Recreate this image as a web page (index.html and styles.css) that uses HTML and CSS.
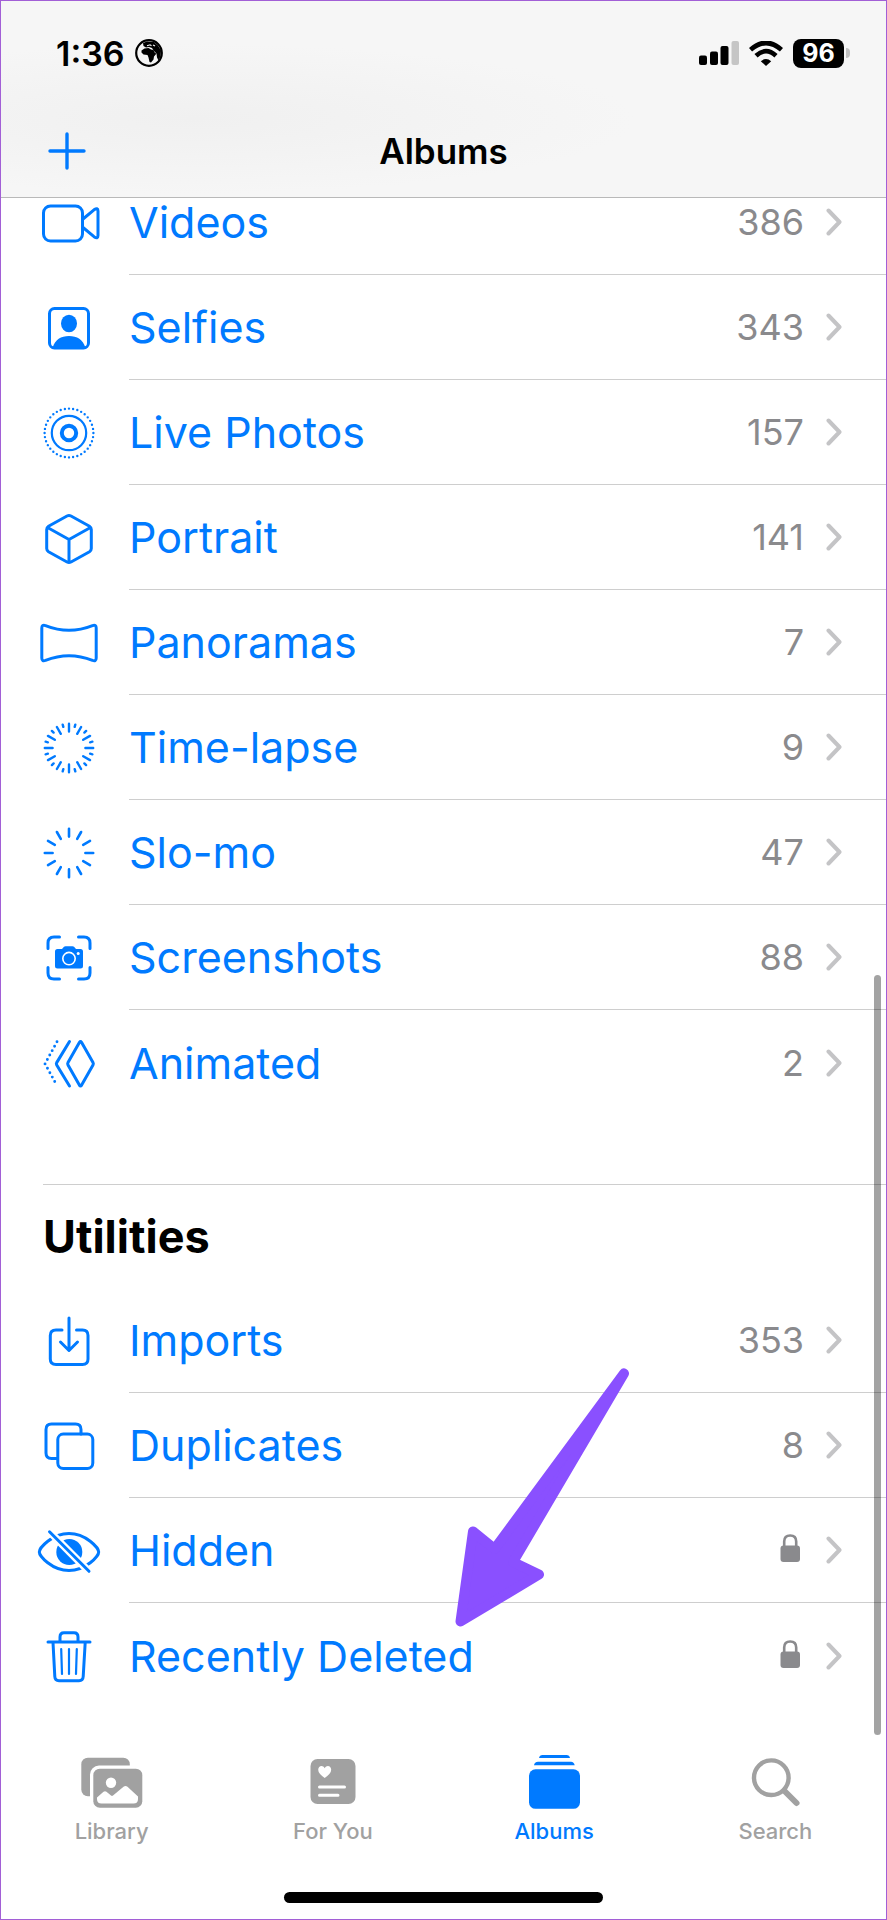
FILE: index.html
```html
<!DOCTYPE html>
<html lang="en">
<head>
    <meta charset="UTF-8">
    <meta name="viewport" content="width=device-width, initial-scale=1.0">
    <title>Albums</title>
    <link rel="stylesheet" href="styles.css">
</head>
<body>
    <header class="top-bar">
        <div class="status-bar">
            <div class="status-left">
                <span class="time">1:36</span>
                <svg class="globe" viewBox="0 0 28 28">
                    <circle cx="14" cy="14" r="12.800" fill="none" stroke="#000" stroke-width="2.200"/>
                    <path d="M8 4l4-1.500 7 0.500 4 3.500 3 5-0.500 6-2 4-1.500-3-0.500-4-2.500-2.500-2-3-3-1-3 0.500-2.500-1.500z"/>
                    <path d="M6.500 11.500l3-2 4-0.500 2.500 1.500 2.500 0.500 1.500 3 1.500 0.500-2.500 3-0.500 3-2.500 3-1.500-0.500-1-4.500-1-2.500-4-0.500-2-2z"/>
                    <path d="M12 6.800l3-1 1.500 1M18 6l2 1" fill="none" stroke="#f6f6f6" stroke-width="1.200"/>
                </svg>
            </div>
            <div class="status-right">
                <svg class="signal" viewBox="0 0 40 24">
                    <rect x="0" y="14.500" width="8" height="9.500" rx="2"/>
                    <rect x="11" y="10.500" width="8" height="13.500" rx="2"/>
                    <rect x="21.500" y="5" width="8" height="19" rx="2"/>
                    <rect x="32.500" y="0" width="7.500" height="24" rx="2" fill="#c5c5c5"/>
                </svg>
                <svg class="wifi" viewBox="0 0 34 25">
                    <path d="M1.500 8.800Q17-5 32.500 8.800" fill="none" stroke="#000" stroke-width="4.800"/>
                    <path d="M7 14.800Q17 5.500 27 14.800" fill="none" stroke="#000" stroke-width="4.600"/>
                    <path d="M11.800 20.200Q17 16 22.200 20.200L17 25z"/>
                </svg>
                <div class="battery"><span class="battery-level">96</span><span class="battery-cap"></span></div>
            </div>
        </div>
        <div class="nav-bar">
            <button class="add-btn" type="button" aria-label="Add album">
                <svg viewBox="0 0 40 40"><path d="M20 3V37M3 20H37"/></svg>
            </button>
            <h1>Albums</h1>
        </div>
    </header>

    <main>
        <section class="album-list">
            <a class="row" href="#videos">
                <svg class="icon" viewBox="0 0 64 64"><rect x="6.500" y="15" width="39" height="35" rx="7"/><path d="M46 28L57 18.800Q61 16 61 20V44.500Q61 48.500 57 45.700L46 36.500"/></svg>
                <span class="row-body"><span class="name">Videos</span><span class="count">386</span><svg class="chevron" viewBox="0 0 16 28"><path d="M2.500 2.500L13.500 14L2.500 25.500"/></svg></span>
            </a>
            <a class="row" href="#selfies">
                <svg class="icon" viewBox="0 0 64 64"><rect x="12.500" y="12.500" width="39" height="39.500" rx="5"/><ellipse class="solid" cx="32" cy="27.500" rx="8" ry="8.700"/><path class="solid" d="M15.500 52C18 43.500 24 40 32 40S46 43.500 48.500 52Z"/></svg>
                <span class="row-body"><span class="name">Selfies</span><span class="count">343</span><svg class="chevron" viewBox="0 0 16 28"><path d="M2.500 2.500L13.500 14L2.500 25.500"/></svg></span>
            </a>
            <a class="row" href="#live-photos">
                <svg class="icon" viewBox="0 0 64 64"><circle cx="32" cy="32" r="24.400" stroke-width="2.400" pathLength="36" stroke-dasharray="0 1"/><circle cx="32" cy="32" r="17.200" stroke-width="2.200"/><circle cx="32" cy="32" r="7.200" stroke-width="4"/></svg>
                <span class="row-body"><span class="name">Live Photos</span><span class="count">157</span><svg class="chevron" viewBox="0 0 16 28"><path d="M2.500 2.500L13.500 14L2.500 25.500"/></svg></span>
            </a>
            <a class="row" href="#portrait">
                <svg class="icon" viewBox="0 0 64 64"><path d="M30 10Q32 9 34 10L52.500 20.200Q54.300 21.300 54.300 23.500V42.500Q54.300 44.600 52.500 45.700L34 56Q32 57 30 56L11.500 45.700Q9.700 44.600 9.700 42.500V23.500Q9.700 21.300 11.500 20.200ZM10.500 21.500L32 33.500L53.500 21.500M32 33.500V56"/></svg>
                <span class="row-body"><span class="name">Portrait</span><span class="count">141</span><svg class="chevron" viewBox="0 0 16 28"><path d="M2.500 2.500L13.500 14L2.500 25.500"/></svg></span>
            </a>
            <a class="row" href="#panoramas">
                <svg class="icon" viewBox="0 0 64 64"><path d="M4.800 17Q4.800 13.400 8.500 14.600Q32 24 55.500 14.600Q59.200 13.400 59.200 17V47Q59.200 50.600 55.500 49.400Q32 40 8.500 49.400Q4.800 50.600 4.800 47Z"/></svg>
                <span class="row-body"><span class="name">Panoramas</span><span class="count">7</span><svg class="chevron" viewBox="0 0 16 28"><path d="M2.500 2.500L13.500 14L2.500 25.500"/></svg></span>
            </a>
            <a class="row" href="#time-lapse">
                <svg class="icon" viewBox="0 0 64 64"><path stroke-width="2.400" d="M32 7.800V15.600M44.100 11L40.200 17.800M53 19.900L46.200 23.800M56.200 32H48.400M53 44.100L46.200 40.200M44.100 53L40.200 46.200M32 56.200V48.400M19.900 53L23.800 46.200M11 44.100L17.800 40.200M7.800 32H15.600M11 19.900L17.800 23.800M19.900 11L23.800 17.800M38.300 8.600L37.700 10.900M49.100 14.900L47.400 16.600M55.400 25.700L53.100 26.300M55.400 38.300L53.100 37.700M49.100 49.100L47.400 47.400M38.300 55.400L37.700 53.100M25.700 55.400L26.300 53.100M14.900 49.100L16.600 47.400M8.600 38.300L10.900 37.700M8.600 25.700L10.900 26.300M14.900 14.900L16.600 16.600M25.700 8.600L26.300 10.900"/></svg>
                <span class="row-body"><span class="name">Time-lapse</span><span class="count">9</span><svg class="chevron" viewBox="0 0 16 28"><path d="M2.500 2.500L13.500 14L2.500 25.500"/></svg></span>
            </a>
            <a class="row" href="#slo-mo">
                <svg class="icon" viewBox="0 0 64 64"><path stroke-width="2.600" d="M32 7.800V15.600M44.100 11L40.200 17.800M53 19.900L46.200 23.800M56.200 32H48.400M53 44.100L46.200 40.200M44.100 53L40.200 46.200M32 56.200V48.400M19.900 53L23.800 46.200M11 44.100L17.800 40.200M7.800 32H15.600M11 19.900L17.800 23.800M19.900 11L23.800 17.800"/></svg>
                <span class="row-body"><span class="name">Slo-mo</span><span class="count">47</span><svg class="chevron" viewBox="0 0 16 28"><path d="M2.500 2.500L13.500 14L2.500 25.500"/></svg></span>
            </a>
            <a class="row" href="#screenshots">
                <svg class="icon" viewBox="0 0 64 64"><path d="M11 22.500V17Q11 11 17 11H22.500M41.500 11H47Q53 11 53 17V22.500M53 41.500V47Q53 53 47 53H41.500M22.500 53H17Q11 53 11 47V41.500"/><path class="solid" d="M20.500 23H25L27 20.800Q27.500 20.300 28.500 20.300H35.500Q36.500 20.300 37 20.800L39 23H43.500Q46 23 46 25.500V40Q46 42.500 43.500 42.500H20.500Q18 42.500 18 40V25.500Q18 23 20.500 23Z"/><circle cx="32" cy="32.600" r="6.200" stroke="#fff" stroke-width="1.600"/><circle class="light" cx="41.200" cy="27.500" r="1.500"/></svg>
                <span class="row-body"><span class="name">Screenshots</span><span class="count">88</span><svg class="chevron" viewBox="0 0 16 28"><path d="M2.500 2.500L13.500 14L2.500 25.500"/></svg></span>
            </a>
            <a class="row" href="#animated">
                <svg class="icon" viewBox="0 0 64 64"><path d="M42.500 11.300Q43.500 9.800 44.500 11.300L56 31.600Q56.700 32.800 56 34L44.500 54.300Q43.500 55.800 42.500 54.300L31 34Q30.300 32.800 31 31.600ZM32.500 10.500L19.700 31.600Q19 32.800 19.700 34L32.500 55"/><path stroke-width="2.900" stroke-dasharray="0 5.030" d="M20 10.800L8 32.800L20.100 54.900"/></svg>
                <span class="row-body"><span class="name">Animated</span><span class="count">2</span><svg class="chevron" viewBox="0 0 16 28"><path d="M2.500 2.500L13.500 14L2.500 25.500"/></svg></span>
            </a>
        </section>

        <section class="album-list utilities">
            <h2>Utilities</h2>
            <a class="row" href="#imports">
                <svg class="icon" viewBox="0 0 64 64"><path d="M25 21H19Q13.300 21 13.300 26.500V50Q13.300 55.500 19 55.500H45.500Q51 55.500 51 50V26.500Q51 21 45.500 21H39.500M32 9V41M23.500 33L32 41.500L40.500 33"/></svg>
                <span class="row-body"><span class="name">Imports</span><span class="count">353</span><svg class="chevron" viewBox="0 0 16 28"><path d="M2.500 2.500L13.500 14L2.500 25.500"/></svg></span>
            </a>
            <a class="row" href="#duplicates">
                <svg class="icon" viewBox="0 0 64 64"><path d="M44 20V15.500Q44 10 38.500 10H14.500Q9 10 9 15.500V39Q9 44.500 14.500 44.500H20"/><rect x="20.800" y="20.100" width="35" height="34.500" rx="5.500"/></svg>
                <span class="row-body"><span class="name">Duplicates</span><span class="count">8</span><svg class="chevron" viewBox="0 0 16 28"><path d="M2.500 2.500L13.500 14L2.500 25.500"/></svg></span>
            </a>
            <a class="row" href="#hidden">
                <svg class="icon" viewBox="0 0 64 64"><path d="M2.300 33C2.300 29 15 14.500 32 14.500S61.700 29 61.700 33S49 51.500 32 51.500S2.300 37 2.300 33Z"/><circle class="solid" cx="32.300" cy="33" r="13"/><path d="M14 14.200L51 51.500" stroke="#fff" stroke-width="7.500" stroke-linecap="butt"/><path d="M12.500 12.800L52 52.300"/></svg>
                <span class="row-body"><span class="name">Hidden</span><svg class="lock" viewBox="0 0 24 34" role="img" aria-label="Locked"><rect x="0.500" y="12.500" width="19.500" height="16.500" rx="3"/><path d="M4.200 13V8.500Q4.200 2.500 10.200 2.500T16.200 8.500V13"/></svg><svg class="chevron" viewBox="0 0 16 28"><path d="M2.500 2.500L13.500 14L2.500 25.500"/></svg></span>
            </a>
            <a class="row" href="#recently-deleted">
                <svg class="icon" viewBox="0 0 64 64"><path d="M11 18H53M23 17.500V13Q23 8.800 27 8.800H37Q41 8.800 41 13V17.500M16 18.500L17.800 52.500Q18 56.700 22 56.700H42Q46 56.700 46.200 52.500L48.200 18.500"/><path stroke-width="2.200" d="M24.200 25L25 50M32 25V50M39.800 25L39 50"/></svg>
                <span class="row-body"><span class="name">Recently Deleted</span><svg class="lock" viewBox="0 0 24 34" role="img" aria-label="Locked"><rect x="0.500" y="12.500" width="19.500" height="16.500" rx="3"/><path d="M4.200 13V8.500Q4.200 2.500 10.200 2.500T16.200 8.500V13"/></svg><svg class="chevron" viewBox="0 0 16 28"><path d="M2.500 2.500L13.500 14L2.500 25.500"/></svg></span>
            </a>
            <svg class="pointer-arrow" viewBox="450 1360 190 275"><path d="M624 1373.500L494.500 1549L473 1531.500L460.500 1621.500L539 1574.500L513 1562Z"/></svg>
        </section>
    </main>

    <div class="scroll-thumb"></div>

    <footer>
        <nav class="tabs">
            <a class="tab" href="#library">
                <svg viewBox="0 0 64 56"><rect x="1.300" y="3.700" width="48.500" height="38.500" rx="6.500"/><rect class="light" x="10" y="11.500" width="56" height="46" rx="9"/><rect x="13.300" y="14.700" width="49" height="39" rx="6.500"/><circle class="light" cx="31" cy="28.700" r="5.200"/><path class="light" d="M17 43.500L23.500 37.800Q25 36.600 26.500 37.800L31 41.500Q32 42.300 33 41.500L43.500 32.700Q45.500 31.200 47.500 32.700L58 42.500V45Q58 49.500 53.500 49.500H21.500Q17 49.500 17 45Z"/></svg>
                <span>Library</span>
            </a>
            <a class="tab" href="#for-you">
                <svg viewBox="0 0 64 56"><rect x="9.500" y="5" width="45" height="45" rx="7"/><path class="light" d="M23.700 24C20 21.500 17.200 18.600 17.200 15.700C17.200 11.500 22 10.600 23.700 14.200C25.400 10.600 30.200 11.500 30.200 15.700C30.200 18.600 27.400 21.500 23.700 24Z"/><path d="M18.500 33H43.500M18.500 41.200H37" stroke="#fff" stroke-width="3" stroke-linecap="round"/></svg>
                <span>For You</span>
            </a>
            <a class="tab active" href="#albums" aria-current="page">
                <svg viewBox="0 0 64 56"><path d="M17 4Q17.500 1 20.500 1H44.500Q47.500 1 48 4ZM12 11.200Q12.500 7.700 16 7.700H49Q52 7.700 52.700 11.200Z"/><rect x="7" y="15.300" width="51" height="39.500" rx="6.500"/></svg>
                <span>Albums</span>
            </a>
            <a class="tab" href="#search">
                <svg viewBox="0 0 64 56"><g fill="none" stroke="currentColor" stroke-linecap="round"><circle cx="28.300" cy="23.700" r="17.300" stroke-width="4.400"/><path d="M41.500 37L53.500 49" stroke-width="6"/></g></svg>
                <span>Search</span>
            </a>
        </nav>
        <div class="home-indicator"></div>
    </footer>
</body>
</html>
```
FILE: styles.css
```css
* {
    box-sizing: border-box;
}
body {
    position: relative;
    display: flex;
    flex-direction: column;
    min-height: 100vh;
    margin: 0;
    border: 1px solid #a25fd6;
    background-color: #fff;
    color: #000;
    font-family: Inter, "Liberation Sans", sans-serif;
}
h1, h2 {
    margin: 0;
}
a {
    text-decoration: none;
}

/* Header */
.top-bar {
    position: relative;
    z-index: 1;
    border-bottom: 1px solid #b9b9b9;
    background: radial-gradient(ellipse at 22% 60%, #f0f0f0, #f6f6f6 45%);
}
.status-bar {
    display: flex;
    justify-content: space-between;
    align-items: center;
    height: 104px;
    padding: 0 36px 0 55px;
}
.status-left, .status-right {
    display: flex;
    align-items: center;
    gap: 10px;
}
.time {
    font-size: 34px;
    font-weight: 600;
}
.globe {
    width: 28px;
    height: 28px;
}
.signal {
    width: 40px;
    height: 24px;
}
.wifi {
    width: 34px;
    height: 25px;
}
.battery {
    display: flex;
    align-items: center;
    gap: 2px;
}
.battery-level {
    width: 51px;
    border-radius: 8px;
    background-color: #000;
    color: #fff;
    font-size: 25px;
    font-weight: 700;
    line-height: 29px;
    text-align: center;
}
.battery-cap {
    width: 4px;
    height: 10px;
    border-radius: 0 4px 4px 0;
    background-color: #c0c0c0;
}
.nav-bar {
    display: grid;
    grid-template-columns: 1fr auto 1fr;
    align-items: center;
    height: 92px;
    padding: 0 46px;
}
.nav-bar h1 {
    font-size: 35px;
    font-weight: 600;
}
.add-btn {
    width: 40px;
    height: 40px;
    padding: 0;
    border: none;
    background: none;
    cursor: pointer;
}
.add-btn svg {
    display: block;
    fill: none;
    stroke: #007aff;
    stroke-width: 3.4;
    stroke-linecap: round;
}

/* Album rows, scrolled partly under the header */
main {
    margin-top: -28px;
}
.row {
    display: flex;
    align-items: center;
    gap: 28px;
    padding-left: 36px;
    color: #007aff;
}
.icon {
    flex: none;
    width: 64px;
    height: 64px;
    fill: none;
    stroke: #007aff;
    stroke-width: 3;
    stroke-linecap: round;
    stroke-linejoin: round;
}
.icon .solid {
    fill: #007aff;
    stroke: none;
}
.icon .light {
    fill: #fff;
    stroke: none;
}
.row-body {
    display: flex;
    flex: 1;
    align-items: center;
    gap: 22px;
    height: 105px;
    padding-right: 44px;
    border-bottom: 1px solid #cecece;
}
.row:last-of-type .row-body {
    border-bottom: none;
}
.name {
    flex: 1;
    font-size: 43px;
}
.count {
    color: #8a8a8d;
    font-size: 36px;
}
.chevron {
    width: 16px;
    height: 28px;
    fill: none;
    stroke: #c4c4c6;
    stroke-width: 4;
    stroke-linecap: round;
    stroke-linejoin: round;
}
.lock {
    width: 24px;
    height: 34px;
    fill: #8a8a8d;
}
.lock path {
    fill: none;
    stroke: #8a8a8d;
    stroke-width: 2.6;
}

/* Utilities */
.utilities {
    position: relative;
    margin-top: 69px;
}
.utilities h2 {
    margin-left: 42px;
    border-top: 1px solid #cecece;
    font-size: 45px;
    font-weight: 700;
    line-height: 103px;
}
.pointer-arrow {
    position: absolute;
    top: 176px;
    left: 449px;
    width: 190px;
    height: 275px;
    fill: #8a50ff;
    stroke: #8a50ff;
    stroke-width: 10;
    stroke-linejoin: round;
    pointer-events: none;
}
.scroll-thumb {
    position: absolute;
    top: 974px;
    right: 5px;
    width: 7px;
    height: 760px;
    border-radius: 4px;
    background-color: rgba(0, 0, 0, 0.36);
}

/* Tab bar */
footer {
    margin-top: auto;
    padding-bottom: 16px;
}
.tabs {
    display: grid;
    grid-template-columns: repeat(4, 1fr);
}
.tab {
    display: flex;
    flex-direction: column;
    align-items: center;
    gap: 8px;
    color: #a1a1a1;
    font-size: 22px;
    font-weight: 500;
    line-height: 26px;
}
.tab.active {
    color: #007aff;
}
.tab svg {
    width: 64px;
    height: 56px;
    fill: currentColor;
}
.tab .light {
    fill: #fff;
}
.home-indicator {
    width: 36%;
    height: 11px;
    margin: 48px auto 0;
    border-radius: 6px;
    background-color: #000;
}
```
